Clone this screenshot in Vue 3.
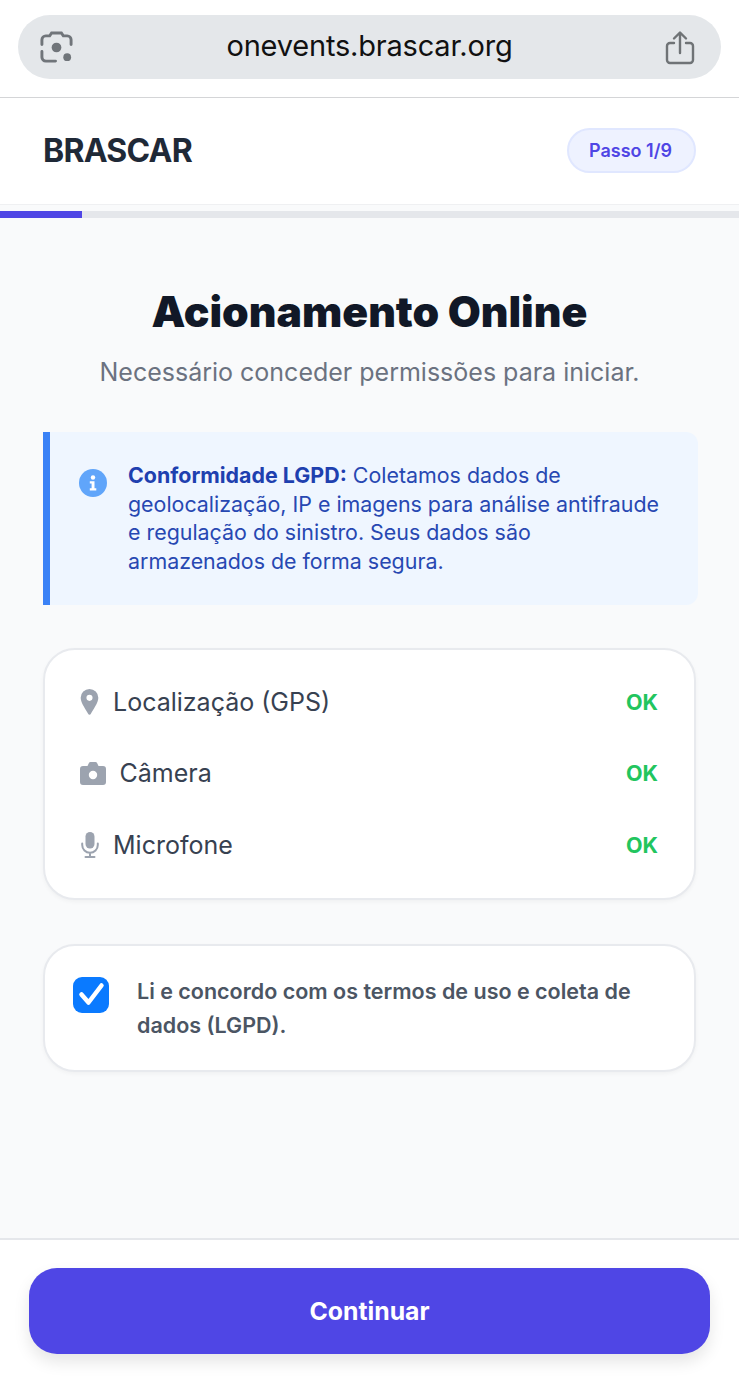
<script setup>
const rows = [
  { key: 'pin', label: 'Localização (GPS)' },
  { key: 'cam', label: 'Câmera' },
  { key: 'mic', label: 'Microfone' }
]
</script>

<template>
  <div class="page">
    <div class="browser">
      <div class="url-pill">
        <svg class="lens" viewBox="0 0 36 36" fill="none">
          <path d="M3 15V10a4 4 0 0 1 4-4h4l2-3h10l2 3h4a4 4 0 0 1 4 4v5M3 22v6a4 4 0 0 0 4 4h10" stroke="#70757a" stroke-width="3" stroke-linecap="round"/>
          <circle cx="18" cy="18" r="5" fill="#70757a"/>
          <circle cx="29" cy="28" r="4" fill="#70757a"/>
        </svg>
        <span class="url">onevents.brascar.org</span>
        <svg class="share" viewBox="0 0 32 36" fill="none" stroke="#6f7376" stroke-width="2.4" stroke-linecap="round" stroke-linejoin="round">
          <path d="M10 13H6a3 3 0 0 0-3 3v14a3 3 0 0 0 3 3h20a3 3 0 0 0 3-3V16a3 3 0 0 0-3-3h-4"/>
          <path d="M16 23V3M10 8.500l6-6 6 6"/>
        </svg>
      </div>
    </div>

    <header class="head">
      <span class="brand">BRASCAR</span>
      <span class="badge">Passo 1/9</span>
    </header>

    <div class="track"><div class="fill"></div></div>

    <main class="main">
      <h1 class="title">Acionamento Online</h1>
      <p class="sub">Necessário conceder permissões para iniciar.</p>

      <section class="notice">
        <svg class="info" viewBox="0 0 28 28">
          <circle cx="14" cy="14" r="14" fill="#60a5fa"/>
          <circle cx="14" cy="8.500" r="2.200" fill="#fff"/>
          <path d="M10.800 12.200h4.700v7h1.800v2.200h-6.500v-2.200h1.800v-4.800h-1.800z" fill="#fff"/>
        </svg>
        <p class="notice-text"><strong>Conformidade LGPD:</strong> Coletamos dados de geolocalização, IP e imagens para análise antifraude e regulação do sinistro. Seus dados são armazenados de forma segura.</p>
      </section>

      <section class="card perms">
        <div v-for="r in rows" :key="r.key" class="row">
          <span class="row-left">
            <svg v-if="r.key === 'pin'" class="ic-pin" viewBox="0 0 20 28">
              <path fill-rule="evenodd" d="M10 0a9.500 9.500 0 0 1 9.500 9.500c0 5.500-6 13.500-8 17.200a1.700 1.700 0 0 1-3 0C6.500 23 .500 15 .500 9.500A9.500 9.500 0 0 1 10 0zm0 6.200a3.300 3.300 0 1 0 0 6.600 3.300 3.300 0 0 0 0-6.600z" fill="#9ca3af"/>
            </svg>
            <svg v-else-if="r.key === 'cam'" class="ic-cam" viewBox="0 0 26 23">
              <path fill-rule="evenodd" d="M3 4h4.500l1.300-2.800A2 2 0 0 1 10.600 0h4.800a2 2 0 0 1 1.800 1.200L18.500 4H23a3 3 0 0 1 3 3v13a3 3 0 0 1-3 3H3a3 3 0 0 1-3-3V7a3 3 0 0 1 3-3zm10 4.800a4.200 4.200 0 1 0 0 8.400 4.200 4.200 0 0 0 0-8.400z" fill="#9ca3af"/>
            </svg>
            <svg v-else class="ic-mic" viewBox="0 0 18 26" fill="none">
              <rect x="4.500" y="0" width="9" height="16.500" rx="4.500" fill="#9ca3af"/>
              <path d="M1.200 11.500v1.500a7.800 7.800 0 0 0 15.600 0v-1.500M9 21v3.500M4.500 25h9" stroke="#9ca3af" stroke-width="2" stroke-linecap="round"/>
            </svg>
            <span class="row-label" :class="{ 'cam-label': r.key === 'cam' }">{{ r.label }}</span>
          </span>
          <span class="ok">OK</span>
        </div>
      </section>

      <section class="card terms">
        <span class="check">
          <svg viewBox="0 0 36 36" fill="none">
            <path d="M8.500 17.500l7 8L28.500 8.500" stroke="#fff" stroke-width="4.500" stroke-linecap="round" stroke-linejoin="round"/>
          </svg>
        </span>
        <span class="terms-text">Li e concordo com os termos de uso e coleta de dados (LGPD).</span>
      </section>
    </main>

    <footer class="foot">
      <button class="cta" type="button">Continuar</button>
    </footer>
  </div>
</template>

<style scoped>
.page {
  width: 739px;
  height: 1377px;
  display: flex;
  flex-direction: column;
  overflow: hidden;
  background: #f9fafb;
  font-family: Inter, "Noto Sans", sans-serif;
}
.browser {
  background: #fff;
  padding: 15px 18px 18px;
  border-bottom: 1px solid #d4d5d7;
}
.url-pill {
  height: 64px;
  border-radius: 32px;
  background: #e4e7ea;
  display: flex;
  align-items: center;
  justify-content: space-between;
  padding: 0 25px 0 21px;
}
.lens { width: 35px; height: 35px; }
.share { width: 32px; height: 36px; margin-top: 1px; }
.url {
  font-size: 29px;
  letter-spacing: -0.2px;
  color: #111;
  margin: 0 0 4px 1px;
}
.head {
  background: #fff;
  height: 107px;
  padding: 0 43px 2px;
  display: flex;
  align-items: center;
  justify-content: space-between;
  border-bottom: 1px solid #eff0f2;
  box-sizing: border-box;
}
.brand {
  font-size: 32px;
  font-weight: 700;
  letter-spacing: -0.75px;
  color: #1f2937;
}
.badge {
  height: 45px;
  width: 129px;
  box-sizing: border-box;
  display: flex;
  align-items: center;
  justify-content: center;
  border: 2px solid #e0e7ff;
  border-radius: 23px;
  background: #eef2ff;
  color: #4f46e5;
  font-size: 18px;
  font-weight: 600;
  padding-right: 2px;
}
.track {
  height: 7px;
  margin-top: 6px;
  background: #e5e7eb;
}
.fill {
  width: 82px;
  height: 100%;
  background: #4f46e5;
}
.main {
  flex: 1;
  padding: 0 43px;
  display: flex;
  flex-direction: column;
}
.title {
  margin: 66px 0 0;
  text-align: center;
  font-size: 42.700px;
  line-height: 56px;
  font-weight: 900;
  letter-spacing: 0;
  color: #111827;
}
.sub {
  margin: 14px 0 0;
  text-align: center;
  font-size: 25px;
  line-height: 36px;
  color: #6b7280;
}
.notice {
  margin-top: 42px;
  width: 655px;
  height: 173px;
  box-sizing: border-box;
  display: flex;
  gap: 21px;
  padding: 29px 28px 0 29px;
  border-left: 7px solid #3b82f6;
  border-radius: 0 12px 12px 0;
  background: #eff6ff;
}
.info { width: 28px; height: 28px; flex: none; margin-top: 8px; }
.notice-text {
  margin: 0;
  font-size: 21.400px;
  line-height: 28.700px;
  color: #2748b2;
}
.notice-text strong { font-weight: 700; color: #1e40af; }
.card {
  box-sizing: border-box;
  width: 653px;
  background: #fff;
  border: 2px solid #e8eaee;
  border-radius: 32px;
  box-shadow: 0 2px 4px rgba(0, 0, 0, 0.04);
}
.perms {
  margin-top: 42.500px;
  height: 252.500px;
  padding: 16.500px 36px 17.500px 35px;
  display: flex;
  flex-direction: column;
}
.row {
  flex: 1;
  display: flex;
  align-items: center;
  justify-content: space-between;
}
.row-left { display: flex; align-items: center; }
.row-label { font-size: 25px; color: #374151; margin-left: 14px; }
.cam-label { margin-left: 13.500px; }
.ic-pin { width: 19px; height: 26px; }
.ic-cam { width: 26px; height: 23px; }
.ic-mic { width: 18px; height: 26px; margin-left: 1px; }
.ok { font-size: 21.500px; font-weight: 700; color: #22c55e; }
.terms {
  margin-top: 44px;
  height: 128px;
  display: flex;
  align-items: flex-start;
  padding: 31px 50px 0 28px;
  gap: 28px;
}
.check {
  flex: none;
  width: 36px;
  height: 36px;
  border-radius: 9px;
  background: #0a7aff;
  display: block;
}
.check svg { display: block; width: 36px; height: 36px; }
.terms-text {
  font-size: 21.500px;
  line-height: 34px;
  font-weight: 600;
  color: #4b5563;
  margin-top: -3px;
}
.foot {
  height: 139px;
  box-sizing: border-box;
  background: #fff;
  border-top: 2px solid #e5e7eb;
  padding: 28px 29px 0;
}
.cta {
  display: block;
  width: 681px;
  height: 86px;
  border: 0;
  border-radius: 28px;
  background: #4f46e5;
  color: #fff;
  font-family: inherit;
  font-size: 24.800px;
  font-weight: 700;
  padding-bottom: 1px;
  box-shadow: 0 8px 16px rgba(0, 0, 0, 0.1);
}
</style>
